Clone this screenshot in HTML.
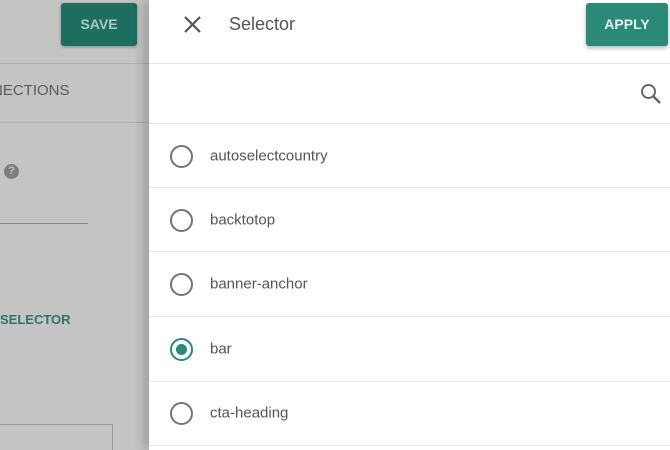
<!DOCTYPE html>
<html><head><style>
*{margin:0;padding:0;box-sizing:border-box}
html,body{width:670px;height:450px;overflow:hidden}
body{position:relative;font-family:"Liberation Sans",sans-serif;background:#c6c6c6}
.left{position:absolute;left:0;top:0;width:149px;height:450px;background:#c4c4c4;overflow:hidden}
.save{position:absolute;left:61px;top:3px;width:76px;height:43px;background:#1d6e5f;border-radius:3px;color:#a9c9c1;font-weight:bold;font-size:14px;line-height:43px;text-align:center;box-shadow:0 1px 3px rgba(0,0,0,.3)}
.hl{position:absolute;left:0;width:149px;height:1px;background:#aeaeae}
.panel{position:absolute;left:149px;top:0;width:521px;height:450px;background:#fff;box-shadow:-6px 0 10px rgba(0,0,0,.18);overflow:hidden}
.div{position:absolute;left:0;right:0;height:1px;background:#e6e6e6}
.row{position:absolute;left:0;right:0;height:64px}
.radio{position:absolute;left:21px;top:50%;margin-top:-11px;width:23px;height:23px;border:2px solid #757575;border-radius:50%}
.radio.on{border-color:#2a8a77}
.radio.on::after{content:"";position:absolute;left:4px;top:4px;width:11px;height:11px;border-radius:50%;background:#2a8a77}
.lbl{position:absolute;left:61px;top:50%;transform:translateY(-50%);font-size:15px;color:#555}
.apply{position:absolute;left:437px;top:3px;width:82px;height:43px;background:#2a8a77;border-radius:3px;color:#e6f2ef;font-weight:bold;font-size:14px;line-height:43px;text-align:center;box-shadow:0 2px 4px rgba(0,0,0,.3)}
</style></head><body>
<div class="left">
<div class="save">SAVE</div>
<div class="hl" style="top:63px"></div>
<div style="position:absolute;left:-8px;top:82px;font-size:15px;color:#5a5a5a">NECTIONS</div>
<div class="hl" style="top:122px"></div>
<div style="position:absolute;left:4px;top:164px;width:15px;height:15px;border-radius:50%;background:#7d7d7d;color:#c4c4c4;font-size:11px;font-weight:bold;text-align:center;line-height:15px">?</div>
<div class="hl" style="top:223px;width:88px;background:#888"></div>
<div style="position:absolute;left:0;top:312px;font-size:13px;font-weight:bold;color:#2f7566">SELECTOR</div>
<div style="position:absolute;left:-2px;top:424px;width:115px;height:40px;border:1px solid #999"></div>
</div>
<div class="panel">
<svg style="position:absolute;left:34px;top:15px" width="19" height="19" viewBox="0 0 19 19"><path d="M2 2L17 17M17 2L2 17" stroke="#555" stroke-width="2.2"/></svg>
<div style="position:absolute;left:80px;top:14px;font-size:18px;color:#555">Selector</div>
<div class="apply">APPLY</div>
<div class="div" style="top:63px"></div>
<svg style="position:absolute;left:491px;top:83px" width="22" height="22" viewBox="0 0 22 22"><circle cx="8.5" cy="8.5" r="6.5" fill="none" stroke="#666" stroke-width="2"/><path d="M13 13L20 20" stroke="#666" stroke-width="2.4"/></svg>
<div class="div" style="top:123px"></div>
<div class="row" style="top:124px"><div class="radio"></div><div class="lbl">autoselectcountry</div></div>
<div class="div" style="top:187px"></div>
<div class="row" style="top:188px"><div class="radio"></div><div class="lbl">backtotop</div></div>
<div class="div" style="top:251px"></div>
<div class="row" style="top:252px"><div class="radio"></div><div class="lbl">banner-anchor</div></div>
<div class="div" style="top:316px"></div>
<div class="row" style="top:317px"><div class="radio on"></div><div class="lbl">bar</div></div>
<div class="div" style="top:381px"></div>
<div class="row" style="top:381px"><div class="radio"></div><div class="lbl">cta-heading</div></div>
<div class="div" style="top:445px"></div>
</div>
</body></html>
